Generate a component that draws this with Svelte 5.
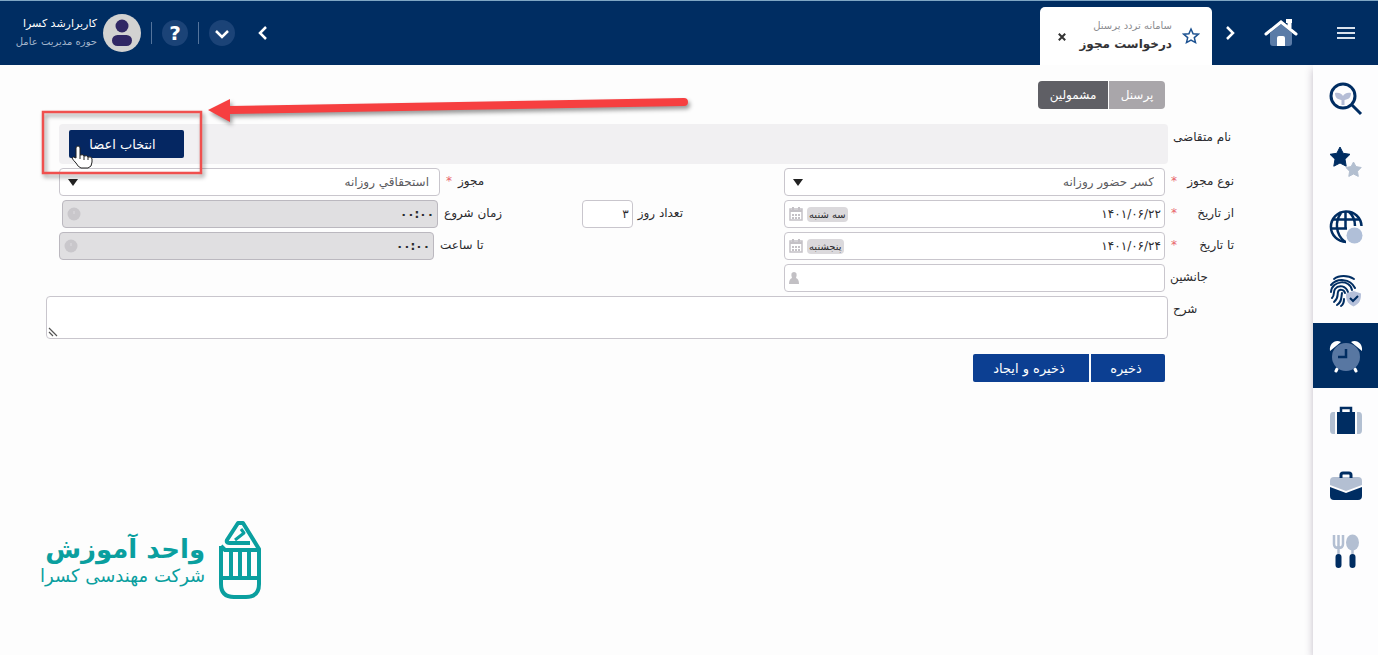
<script lang="ts">
	type Field = 'select' | 'date' | 'person';

	const modules = ['search', 'favorites', 'portal', 'attendance', 'time', 'travel', 'business', 'food'];
	const moduleTitles: Record<string, string> = {
		search: 'جستجو',
		favorites: 'علاقه‌مندی‌ها',
		portal: 'پرتال',
		attendance: 'حضور و غیاب',
		time: 'تردد پرسنل',
		travel: 'سفر',
		business: 'ماموریت',
		food: 'تغذیه'
	};

	let activeModule = $state('time');
	let scope = $state('members');
	let permitKind = $state('کسر حضور روزانه');
	let permit = $state('استحقاقي روزانه');
	let fromDate = $state('۱۴۰۱/۰۶/۲۲');
	let toDate = $state('۱۴۰۱/۰۶/۲۴');
	let days = $state('۳');
	let substitute = $state('');
	let description = $state('');
</script>

{#snippet moduleIcon(name: string)}
	<svg viewBox="0 0 34 34" aria-hidden="true">
		{#if name === 'search'}
			<path d="M14 23V14" stroke="#b5bdd6" stroke-width="3" />
			<path d="M14 18c-5 0-8-2-8-7 4-1 7 1 8 3 1-2 4-4 8-3 0 5-3 7-8 7z" fill="#b5bdd6" />
			<circle cx="14" cy="14" r="12" fill="none" stroke="#002d62" stroke-width="3" />
			<path d="M23 23l9 9" stroke="#002d62" stroke-width="3" />
		{:else if name === 'favorites'}
			<path d="M11 1l3.200 6.300 6.800 1-5 4.900 1.200 7-6.200-3.200L4.800 20.200 6 13.200 1 8.300l6.800-1z" fill="#002d62" stroke="#002d62" stroke-linejoin="round" />
			<path d="M24.500 16l2.500 4.600 5.200.9-3.700 3.700.8 5.200-4.800-2.400-4.700 2.400.8-5.200-3.700-3.700 5.200-.9z" fill="#b3bfd0" stroke="#b3bfd0" stroke-linejoin="round" />
		{:else if name === 'portal'}
			<g fill="none" stroke="#002d62" stroke-width="2.500">
				<path d="M17 32A15.300 15.300 0 1 1 32.500 16" />
				<path d="M12 3c-6 8-6 21 4 29M20 2c5 4 6 8 6 14M16.500 2v16M4 9.500h26M2 18.500h16" />
			</g>
			<circle cx="25.500" cy="25.500" r="8" fill="#b0bfd8" />
		{:else if name === 'attendance'}
			<g fill="none" stroke="#002d62" stroke-width="2" stroke-linecap="round">
				<path d="M5 5c5-4 14-4 20 0M2 11C8 4 21 4 26 14M2 18C3 6 21 5 23 16" />
				<path d="M3 24c3-3 1-6 3-9 4-5 11-3 13 3M5 28c5-4 3-7 4-10 1-3 6-3 7 1M8 31c5-3 4-7 5-12M12 32c3-2 3-4 3-7" />
			</g>
			<path d="M24.500 17l7.500 2.500c0 6-1 10-7.500 13-6.500-3-7.500-7-7.500-13z" fill="#b5c0da" />
			<path d="M21 24l3 3 5-5" fill="none" stroke="#002d62" stroke-width="2" />
		{:else if name === 'time'}
			<path d="M1 12C0 5 6 0 12 3zM33 12c1-7-5-12-11-9z" fill="#fff" />
			<path d="M8 30l-1 2M26 30l1 2" stroke="#fff" stroke-width="3" stroke-linecap="round" />
			<circle cx="17" cy="18" r="14" fill="#5877a2" />
			<path d="M17 10v8h-8" fill="none" stroke="#002d62" stroke-width="2.500" />
		{:else if name === 'travel'}
			<path d="M6 8v22H4q-3 0-3-4V12q0-4 3-4zM28 8v22h2q3 0 3-4V12q0-4-3-4z" fill="#b3c0d2" />
			<path d="M8 8h18v22H8z" fill="#002d62" />
			<path d="M12 8V4h10v4" fill="none" stroke="#002d62" stroke-width="2.500" />
		{:else if name === 'business'}
			<path d="M1 16v-4q0-4 4-4h24q4 0 4 4v4l-16 6z" fill="#b3bfd2" />
			<path d="M1 18l16 6 16-6v9q0 4-4 4H5q-4 0-4-4z" fill="#002d62" />
			<path d="M12 9V6q0-2 2-2h6q2 0 2 2v3" fill="none" stroke="#002d62" stroke-width="3" />
		{:else}
			<path d="M5 1v9q0 4 4.500 4t4.500-4V1M9.500 1v21" fill="none" stroke="#b3bfd2" stroke-width="2.500" />
			<ellipse cx="23.500" cy="8.500" rx="6.500" ry="8" fill="#b3bfd2" />
			<path d="M23.500 14v8" stroke="#b3bfd2" stroke-width="2.500" />
			<path d="M9.500 23v8M23.500 23v8" stroke="#002d62" stroke-width="6" stroke-linecap="round" />
		{/if}
	</svg>
{/snippet}

{#snippet fieldIcon(kind: Field | 'clock')}
	<svg class="field-icon" viewBox="0 0 14 14" aria-hidden="true">
		{#if kind === 'date'}
			<path d="M1 2h12v11H1z" fill="none" stroke="#c4c1c6" stroke-width="1.500" />
			<path d="M1 4h12M4 0v4M10 0v4" stroke="#c4c1c6" stroke-width="2" />
			<path d="M3 8h8M3 11h8" stroke="#c4c1c6" stroke-width="2" stroke-dasharray="2 1" />
		{:else if kind === 'person'}
			<path d="M0 13q0-5 3-6Q1 1 5 1t2 6q3 1 3 6z" fill="#c2c0c4" />
		{:else}
			<circle cx="7" cy="7" r="6.500" fill="#c9c7cb" />
			<path d="M7 4v3" stroke="#dddbdf" />
		{/if}
	</svg>
{/snippet}

<div class="page" dir="rtl">
	<header class="topbar">
		<button class="menu" type="button" aria-label="منو">
			<svg width="18" height="14" viewBox="0 0 18 14"><path d="M0 2h18M0 7h18M0 12h18" stroke="#d9e1ec" stroke-width="2" /></svg>
		</button>
		<a class="home" href="#home" aria-label="خانه">
			<svg width="34" height="28" viewBox="0 0 34 28">
				<path d="M6 14L17 5l11 9v10q0 3-3 3H9q-3 0-3-3z" fill="#5a7ba7" />
				<path d="M2 15L17 3l15 12" fill="none" stroke="#fff" stroke-width="3" stroke-linecap="round" />
				<path d="M22 2h6M25.500 9V2" stroke="#fff" stroke-width="4" />
				<path d="M13 19q0-2 2-2h4q2 0 2 2v8h-8z" fill="#fff" />
			</svg>
		</a>
		<button class="arrow" type="button" aria-label="زبانه قبلی">
			<svg width="10" height="14" viewBox="0 0 10 14"><path d="M2 1l6 6-6 6" fill="none" stroke="#fff" stroke-width="2.500" /></svg>
		</button>
		<div class="tab">
			<button class="star" type="button" aria-label="افزودن به علاقه‌مندی‌ها">
				<svg width="18" height="18" viewBox="0 0 18 18"><path d="M9 2l2.100 4.700 5.100.5-3.900 3.400 1.200 5L9 13l-4.500 2.600 1.200-5L1.800 7.200l5.100-.5z" fill="none" stroke="#1d5291" stroke-width="1.500" /></svg>
			</button>
			<div class="tab-text">
				<span class="tab-system">سامانه تردد پرسنل</span>
				<strong class="tab-title">درخواست مجوز</strong>
			</div>
			<button class="close" type="button" aria-label="بستن">
				<svg width="8" height="8" viewBox="0 0 10 10"><path d="M1 1l8 8M9 1L1 9" stroke="#333" stroke-width="2.500" /></svg>
			</button>
		</div>
		<div class="tools">
			<button class="arrow" type="button" aria-label="زبانه بعدی">
				<svg width="10" height="14" viewBox="0 0 10 14"><path d="M8 1L2 7l6 6" fill="none" stroke="#fff" stroke-width="2.500" /></svg>
			</button>
			<button class="round" type="button" aria-label="فهرست زبانه‌ها">
				<svg width="14" height="10" viewBox="0 0 14 10"><path d="M1 2l6 6 6-6" fill="none" stroke="#fff" stroke-width="2.500" /></svg>
			</button>
			<span class="divider"></span>
			<button class="round help" type="button" aria-label="راهنما">?</button>
			<span class="divider"></span>
			<svg class="avatar" viewBox="0 0 38 38" aria-hidden="true">
				<circle cx="19" cy="19" r="19" fill="#d2d2d1" />
				<circle cx="19" cy="12" r="6.500" fill="#302764" />
				<rect x="9" y="21" width="20" height="11" rx="5.500" fill="#302764" />
			</svg>
			<div class="user">
				<span class="user-name">کاربرارشد کسرا</span>
				<span class="user-role">حوزه مدیریت عامل</span>
			</div>
		</div>
	</header>

	<div class="body">
		<nav class="sidebar" aria-label="سامانه‌ها">
			{#each modules as name}
				<button
					type="button"
					class="module"
					class:active={activeModule === name}
					aria-label={moduleTitles[name]}
					onclick={() => (activeModule = name)}
				>
					{@render moduleIcon(name)}
				</button>
			{/each}
		</nav>

		<main class="content">
			<div class="scope">
				<button type="button" class:selected={scope === 'personnel'} onclick={() => (scope = 'personnel')}>پرسنل</button>
				<button type="button" class:selected={scope === 'members'} onclick={() => (scope = 'members')}>مشمولین</button>
			</div>

			<form class="form" onsubmit={(e) => e.preventDefault()}>
				<div class="wide-row">
					<span class="label end">نام متقاضی</span>
					<div class="applicant-bar">
						<button type="button" class="pick">انتخاب اعضا</button>
					</div>
				</div>

				<div class="row">
					<label class="label" for="kind">نوع مجوز <i>*</i></label>
					<div class="box select">
						<select id="kind" bind:value={permitKind}>
							<option>کسر حضور روزانه</option>
						</select>
					</div>
					<span></span>
					<div class="side">
						<label class="label side-label required" for="permit">مجوز <i>*</i></label>
						<div class="box select">
							<select id="permit" bind:value={permit}>
								<option>استحقاقي روزانه</option>
							</select>
						</div>
					</div>
				</div>

				<div class="row">
					<label class="label" for="from">از تاریخ <i>*</i></label>
					<div class="box">
						<input id="from" type="text" bind:value={fromDate} />
						<span class="weekday">سه شنبه</span>
						{@render fieldIcon('date')}
					</div>
					<div class="days">
						<label for="days">تعداد روز</label>
						<div class="box days-box"><input id="days" type="text" bind:value={days} /></div>
					</div>
					<div class="side start">
						<label class="label side-label" for="start">زمان شروع</label>
						<div class="box disabled">
							<input id="start" type="text" value="۰۰:۰۰" disabled />
							{@render fieldIcon('clock')}
						</div>
					</div>
				</div>

				<div class="row">
					<label class="label" for="to">تا تاریخ <i>*</i></label>
					<div class="box">
						<input id="to" type="text" bind:value={toDate} />
						<span class="weekday">پنجشنبه</span>
						{@render fieldIcon('date')}
					</div>
					<span></span>
					<div class="side finish">
						<label class="label side-label" for="end">تا ساعت</label>
						<div class="box disabled">
							<input id="end" type="text" value="۰۰:۰۰" disabled />
							{@render fieldIcon('clock')}
						</div>
					</div>
				</div>

				<div class="row">
					<label class="label end" for="substitute">جانشین</label>
					<div class="box">
						<input id="substitute" type="text" bind:value={substitute} />
						{@render fieldIcon('person')}
					</div>
				</div>

				<div class="wide-row">
					<label class="label end" for="description">شرح</label>
					<div class="area">
						<textarea id="description" bind:value={description}></textarea>
						<svg class="grip" width="10" height="10" viewBox="0 0 10 10" aria-hidden="true"><path d="M1 1l8 8M1 5l4 4" stroke="#555" stroke-width="1.200" /></svg>
					</div>
				</div>

				<div class="actions">
					<button type="submit">ذخیره</button>
					<button type="submit">ذخیره و ایجاد</button>
				</div>
			</form>

			<div class="brand">
				<svg width="42" height="80" viewBox="0 0 42 80" aria-hidden="true">
					<g fill="none" stroke="#0a9f9f" stroke-width="4" stroke-linejoin="round">
						<path d="M2 26v38q0 13 13 13h12q13 0 13-13V29L24 3h-5L8 20q-1 3 2 3h21" />
						<path d="M2 26l4 4h33" />
						<path d="M22 9l3 4-9 7" stroke-width="3" />
						<path d="M2 58h38" />
						<path d="M12 31v27M21 31v27M30 31v27" />
					</g>
				</svg>
				<div class="brand-text">
					<strong>واحد آموزش</strong>
					<span>شرکت مهندسی کسرا</span>
				</div>
			</div>
		</main>
	</div>

	<!-- training callout over the member picker -->
	<svg class="callout" width="700" height="190" viewBox="0 0 700 190" aria-hidden="true">
		<rect x="43" y="112" width="158" height="61" fill="none" stroke="#f0504e" stroke-width="2.500" />
		<path d="M208 110l22-11v7l454-8q4 0 4 4t-4 4l-454 8v8z" fill="#f63f40" />
	</svg>
	<svg class="callout pointer" width="100" height="190" viewBox="0 0 100 190" aria-hidden="true">
		<path d="M76 148q0-2 2-2t2 2v7q4-1 4 1 3-1 4 1 4-1 4 2v3q0 5-4 6h-7q-3-1-5-5-3-3-4-5 1-2 4 0z" fill="#fff" stroke="#222" stroke-linejoin="round" />
		<path d="M80 155v4M84 156v4M88 157v3" stroke="#222" />
	</svg>
</div>

<style>
	:global(body) {
		margin: 0;
		background: #fdfdfd;
	}

	.page {
		position: relative;
		min-height: 100vh;
		display: flex;
		flex-direction: column;
		font-family: 'DejaVu Sans', sans-serif;
		font-size: 12px;
		color: #2b2b2e;
	}

	button,
	input,
	select,
	textarea {
		font: inherit;
		color: inherit;
	}

	button {
		padding: 0;
		border: 0;
		background: none;
		cursor: pointer;
	}

	.topbar {
		box-sizing: border-box;
		height: 65px;
		display: flex;
		align-items: center;
		border-top: 1px solid #7fa6c4;
		background: #002d62;
		color: #fff;
	}

	.menu,
	.home {
		width: 65px;
		text-align: center;
	}

	.topbar svg {
		display: inline-block;
		vertical-align: middle;
	}

	.arrow {
		width: 36px;
	}

	.tab {
		box-sizing: border-box;
		align-self: flex-end;
		width: 172px;
		height: 58px;
		display: flex;
		align-items: center;
		padding: 0 12px 0 18px;
		border-radius: 5px 5px 0 0;
		background: #fff;
	}

	.tab-text {
		flex: 1;
		display: flex;
		flex-direction: column;
		padding-right: 10px;
		white-space: nowrap;
	}

	.tab-system {
		font-size: 10px;
		line-height: 16px;
		color: #8c8c90;
	}

	.tab-title {
		font-size: 12px;
		line-height: 20px;
		color: #333336;
	}

	.tools {
		flex: 1;
		display: flex;
		align-items: center;
		justify-content: flex-end;
		gap: 10px;
		padding-left: 16px;
	}

	.round {
		width: 26px;
		height: 26px;
		border-radius: 50%;
		background: #1b4377;
	}

	.help {
		font-size: 20px;
		font-weight: bold;
		line-height: 26px;
	}

	.divider {
		width: 1px;
		height: 22px;
		background: #54749c;
	}

	.avatar {
		width: 38px;
		height: 38px;
	}

	.user {
		width: 81px;
		margin-right: -4px;
		display: flex;
		flex-direction: column;
		white-space: nowrap;
	}

	.user-name {
		font-size: 11px;
		line-height: 18px;
	}

	.user-role {
		font-size: 10px;
		line-height: 18px;
		color: #a3b5cc;
	}

	.body {
		flex: 1;
		display: flex;
	}

	.sidebar {
		flex: none;
		width: 65px;
		padding-top: 2px;
		display: flex;
		flex-direction: column;
		background: #fdfdfe;
		box-shadow: 0 4px 8px rgba(60, 40, 80, 0.3);
	}

	.module {
		height: 64px;
		display: flex;
		align-items: center;
		justify-content: center;
	}

	.module.active,
	.module.active ~ .module {
		height: 65px;
	}

	.module.active {
		background: #002d62;
	}

	.module svg {
		width: 34px;
		height: 34px;
	}

	.content {
		flex: 1;
		min-width: 0;
		padding: 16px 79px 0 40px;
		display: flex;
		flex-direction: column;
	}

	.scope {
		display: flex;
		gap: 1px;
		margin-right: 69px;
	}

	.scope button {
		width: 56px;
		height: 28px;
		border-radius: 0 4px 4px 0;
		background: #a9a6aa;
		color: #fff;
	}

	.scope button:last-child {
		width: 70px;
		border-radius: 4px 0 0 4px;
	}

	.scope .selected {
		background: #5f5f65;
	}

	.form {
		margin-top: 15px;
		display: flex;
		flex-direction: column;
		gap: 4px;
	}

	.row {
		display: grid;
		grid-template-columns: 69px minmax(0, 381fr) 281px minmax(0, 444fr);
		height: 28px;
		padding-left: 19px;
		align-items: stretch;
	}

	.wide-row {
		display: grid;
		grid-template-columns: 66px minmax(0, 1fr);
	}

	.label {
		box-sizing: border-box;
		display: flex;
		justify-content: space-between;
		padding-left: 6px;
		line-height: 26px;
		white-space: nowrap;
	}

	.label.end {
		justify-content: flex-end;
		padding-left: 5px;
	}

	.label i {
		font-style: normal;
		color: #e8646b;
	}

	.box {
		box-sizing: border-box;
		flex: 1;
		min-width: 0;
		display: flex;
		align-items: center;
		gap: 4px;
		padding: 0 3px 0 4px;
		border: 1px solid #c9c6cd;
		border-radius: 4px;
		background: #fff;
	}

	.box input {
		flex: 1;
		min-width: 0;
		height: 26px;
		padding: 0;
		border: 0;
		outline: 0;
		background: none;
	}

	.select {
		position: relative;
		padding: 0;
	}

	.select select {
		width: 100%;
		height: 26px;
		padding: 0 10px;
		border: 0;
		outline: 0;
		appearance: none;
		background: none;
		color: #5b5b60;
	}

	.select::after {
		content: '';
		position: absolute;
		left: 8px;
		top: 10px;
		border: 5px solid transparent;
		border-top: 7px solid #222;
		border-bottom: 0;
		pointer-events: none;
	}

	.weekday {
		padding: 0 2px;
		border-radius: 4px;
		background: #dbd9dc;
		font-size: 10px;
		line-height: 15px;
		white-space: nowrap;
	}

	.field-icon {
		flex: none;
		width: 14px;
		height: 14px;
	}

	.side {
		display: flex;
	}

	.side-label {
		flex: none;
		width: 63px;
		justify-content: flex-end;
	}

	.required {
		gap: 6px;
	}

	.start {
		padding-left: 3px;
	}

	.start .side-label {
		width: 65px;
	}

	.finish .side-label {
		width: 69px;
	}

	.disabled {
		border-color: #bbb8bf;
		background: #e0dfe1;
	}

	.disabled input {
		font-weight: bold;
	}

	.days {
		display: flex;
		gap: 5px;
		padding-right: 101px;
		line-height: 26px;
		white-space: nowrap;
	}

	.days-box {
		flex: none;
		width: 51px;
	}

	.applicant-bar {
		display: flex;
		align-items: center;
		justify-content: flex-end;
		height: 40px;
		margin-left: 19px;
		padding-left: 10px;
		border-radius: 4px;
		background: #f1f0f2;
	}

	.pick {
		width: 115px;
		height: 28px;
		padding-right: 8px;
		border-radius: 2px;
		background: #052762;
		color: #fff;
		font-size: 13px;
	}

	.area {
		position: relative;
		margin-left: 6px;
	}

	.area textarea {
		box-sizing: border-box;
		display: block;
		width: 100%;
		height: 43px;
		padding: 4px;
		border: 1px solid #c9c6cd;
		border-radius: 4px;
		outline: 0;
		background: #fff;
		resize: none;
	}

	.grip {
		position: absolute;
		left: 2px;
		bottom: 2px;
	}

	.actions {
		display: flex;
		gap: 2px;
		margin: 11px 69px 0 0;
	}

	.actions button {
		width: 74px;
		height: 28px;
		padding-right: 4px;
		border-radius: 0 2px 2px 0;
		background: #0c3f92;
		color: #fff;
		font-size: 13px;
	}

	.actions button:last-child {
		width: 116px;
		border-radius: 2px 0 0 2px;
	}

	.brand {
		align-self: flex-end;
		display: flex;
		gap: 14px;
		margin-top: 138px;
		color: #0a9f9f;
	}

	.brand-text {
		display: flex;
		flex-direction: column;
		padding-top: 12px;
		white-space: nowrap;
	}

	.brand-text strong {
		font-size: 26px;
		line-height: 34px;
	}

	.brand-text span {
		font-size: 18px;
		line-height: 20px;
	}

	.callout {
		position: absolute;
		left: 0;
		top: 0;
		pointer-events: none;
		filter: drop-shadow(2px 3px 2px rgba(0, 0, 0, 0.4));
	}

	.pointer {
		filter: none;
	}
</style>
